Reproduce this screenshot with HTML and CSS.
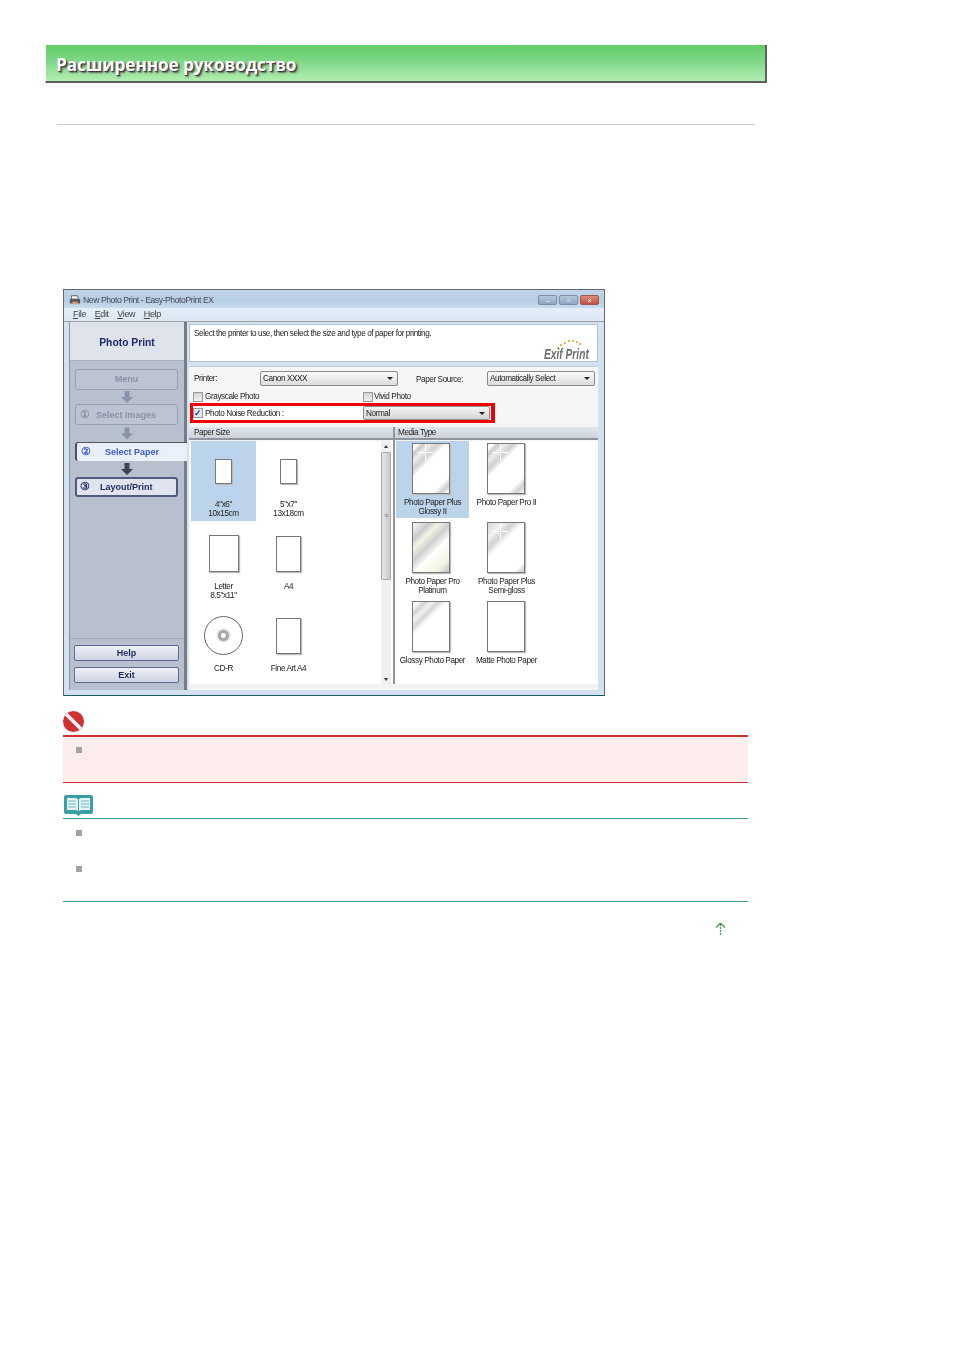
FILE: index.html
```html
<!DOCTYPE html>
<html lang="ru">
<head>
  <meta charset="UTF-8" />
  <title>Расширенное руководство</title>
  <link rel="stylesheet" href="styles.css">
</head>
<body>
  <header class="banner"><h1>Расширенное руководство</h1></header>
  <hr class="rule">

  <div class="window">
    <div class="titlebar">
      <svg class="app-icon" width="12" height="12" viewBox="0 0 14 12"><path d="M3 1h7l1 4H3z" fill="#f3f3f3" stroke="#555"/><rect x="1" y="5" width="12" height="5" fill="#555"/><rect x="4" y="8" width="6" height="3" fill="#d8a070"/></svg>
      <span class="title-text">New Photo Print - Easy-PhotoPrint EX</span>
      <span class="winbtn">–</span><span class="winbtn">▫</span><span class="winbtn close">×</span>
    </div>
    <div class="menubar">
      <span><u>F</u>ile</span><span><u>E</u>dit</span><span><u>V</u>iew</span><span><u>H</u>elp</span>
    </div>

    <div class="win-body">
      <aside class="sidebar">
        <div class="side-head">Photo Print</div>
        <div class="steps">
          <div class="step off center">Menu</div>
          <svg class="arrow a14" viewBox="0 0 14 14"><path d="M4.500 1h5v6h3.500l-6 6-6-6h3.500z" fill="#8a94a8"/></svg>
          <div class="step off"><i class="w17">①</i>Select Images</div>
          <svg class="arrow a17" viewBox="0 0 14 14"><path d="M4.500 1h5v6h3.500l-6 6-6-6h3.500z" fill="#8a94a8"/></svg>
          <div class="step now"><i class="w24">②</i>Select Paper</div>
          <svg class="arrow a16" viewBox="0 0 14 14"><path d="M4.500 1h5v6h3.500l-6 6-6-6h3.500z" fill="#3c4454"/></svg>
          <div class="step next"><i class="w20">③</i>Layout/Print</div>
        </div>
        <div class="side-foot">
          <div class="side-btn">Help</div>
          <div class="side-btn">Exit</div>
        </div>
      </aside>

      <main class="panel">
        <div class="hint">
          <span>Select the printer to use, then select the size and type of paper for printing.</span>
          <div class="exif">
            <svg class="exif-dots" width="46" height="11" viewBox="0 0 46 11">
              <g fill="#f0a030"><circle cx="14" cy="9" r="1.100"/><circle cx="17" cy="6" r="1.100"/><circle cx="21" cy="4" r="1.100"/><circle cx="25" cy="2" r="1.100"/><circle cx="29" cy="2" r="1.100"/><circle cx="33" cy="3" r="1.100"/><circle cx="36" cy="5" r="1.100"/></g>
            </svg>
            <span class="exif-text">Exif Print</span>
          </div>
        </div>

        <div class="options">
          <div class="opt-row first">
            <span class="lbl-printer">Printer:</span>
            <span class="select printer">Canon XXXX</span>
            <span class="lbl-source">Paper Source:</span>
            <span class="select source">Automatically Select</span>
          </div>
          <div class="opt-row second">
            <span class="check-wrap"><span class="check"></span>Grayscale Photo</span>
            <span class="check-wrap"><span class="check"></span>Vivid Photo</span>
          </div>
          <div class="opt-row noise">
            <span class="check-wrap"><span class="check on">✓</span>Photo Noise Reduction :</span>
            <span class="select normal">Normal</span>
          </div>
        </div>

        <div class="panes">
          <section class="pane pane-size">
            <div class="pane-head">Paper Size</div>
            <div class="pane-body">
              <div class="size-grid">
                <div class="size-cell picked"><div class="size-pic"><span class="sheet s-small"></span></div><p>4"x6"<br>10x15cm</p></div>
                <div class="size-cell"><div class="size-pic"><span class="sheet s-small"></span></div><p>5"x7"<br>13x18cm</p></div>
                <div class="size-cell"><div class="size-pic"><span class="sheet s-letter"></span></div><p>Letter<br>8.5"x11"</p></div>
                <div class="size-cell"><div class="size-pic"><span class="sheet s-a4"></span></div><p>A4</p></div>
                <div class="size-cell"><div class="size-pic"><span class="disc"></span></div><p>CD-R</p></div>
                <div class="size-cell"><div class="size-pic"><span class="sheet s-a4"></span></div><p>Fine Art A4</p></div>
              </div>
              <div class="scrollbar">
                <span class="sc-up"></span>
                <span class="sc-thumb">≡</span>
                <span class="sc-down"></span>
              </div>
            </div>
          </section>
          <section class="pane pane-media">
            <div class="pane-head">Media Type</div>
            <div class="media-grid">
              <div class="media-cell picked"><span class="paper glossy"></span><p>Photo Paper Plus<br>Glossy II</p></div>
              <div class="media-cell"><span class="paper glossy"></span><p>Photo Paper Pro II</p></div>
              <div class="media-cell"><span class="paper platinum"></span><p>Photo Paper Pro<br>Platinum</p></div>
              <div class="media-cell"><span class="paper semi"></span><p>Photo Paper Plus<br>Semi-gloss</p></div>
              <div class="media-cell"><span class="paper corner"></span><p>Glossy Photo Paper</p></div>
              <div class="media-cell"><span class="paper"></span><p>Matte Photo Paper</p></div>
            </div>
          </section>
        </div>
      </main>
    </div>
  </div>

  <div class="notice">
    <svg class="icon-stop" width="21" height="21" viewBox="0 0 21 21"><circle cx="10.500" cy="10.500" r="10.500" fill="#cf3030"/><path d="M2 4.500 4.500 2 19 16.500 16.500 19z" fill="#fff"/></svg>
    <div class="alert-box"><span class="bullet"></span></div>
  </div>

  <div class="note">
    <svg class="icon-book" width="29" height="21" viewBox="0 0 29 21">
      <path d="M2 0h25a2 2 0 0 1 2 2v15a2 2 0 0 1-2 2H17l-2.500 2L12 19H2a2 2 0 0 1-2-2V2a2 2 0 0 1 2-2z" fill="#3a9fa5"/>
      <path d="M3 3h9l2 1v12l-2-1H3zM26 3h-9l-2 1v12l2-1h9z" fill="#e6f4f4"/>
      <path d="M4 6h8M4 9h8M4 12h8M17 6h8M17 9h8M17 12h8" stroke="#6fbcc0"/>
    </svg>
    <div class="note-line"></div>
    <div class="note-item"><span class="bullet"></span></div>
    <div class="note-item"><span class="bullet"></span></div>
    <div class="note-end"></div>
  </div>

  <div class="to-top">
    <svg width="11" height="13" viewBox="0 0 11 13"><path d="M5.500 1 1 5.500M5.500 1 10 5.500" stroke="#4d9a5a" stroke-width="1.400" fill="none"/><path d="M5.500 2v11" stroke="#3f9150" stroke-width="1.200" stroke-dasharray="2 1"/></svg>
  </div>
</body>
</html>
```

FILE: styles.css
```css
* {
  margin: 0;
  padding: 0;
  box-sizing: border-box;
}
body {
  background: #fff;
  font-family: "Liberation Sans", Arial, sans-serif;
  width: 954px;
  height: 1350px;
  overflow: hidden;
}

/* green page banner */
.banner {
  width: 722px;
  height: 38px;
  margin: 45px 0 0 45px;
  padding-left: 10px;
  background: linear-gradient(to bottom, #62cb69, #7fd886 45%, #b2eeb0);
  border-right: 2px solid #5f5f5f;
  border-bottom: 2px solid #5f5f5f;
  border-left: 1px solid #fff;
}
.banner h1 {
  font-family: "Open Sans", sans-serif;
  font-size: 17.200px;
  font-weight: 700;
  line-height: 40px;
  letter-spacing: -0.1px;
  color: #fff;
  text-shadow: 1px 1px 1px #333, 2px 2px 2px #666;
}
.rule {
  width: 698px;
  height: 1px;
  margin: 41px 0 0 57px;
  border: 0;
  background: #ccc;
}

/* application window screenshot */
.window {
  width: 542px;
  height: 407px;
  margin: 164px 0 0 63px;
  background: #d3e2f0;
  border: 1px solid #5d6a70;
  border-bottom-color: #1d5a60;
  color: #222;
  font-size: 8.200px;
  letter-spacing: -0.42px;
  filter: blur(0.35px);
}
.titlebar {
  height: 18px;
  display: flex;
  align-items: center;
  gap: 2px;
  padding: 2px 5px 0;
  background: linear-gradient(to bottom, #c3d4e6, #b6cde4 60%, #c8dcee);
}
.app-icon {
  margin-right: 0;
}
.title-text {
  flex: 1;
  color: #4a4a56;
  font-size: 8.600px;
}
.winbtn {
  width: 19px;
  height: 10px;
  line-height: 9px;
  text-align: center;
  color: #fff;
  font-size: 8px;
  background: linear-gradient(#b5c8dc, #8fa8c2);
  border: 1px solid #7c8ea4;
  border-radius: 2px;
}
.winbtn.close {
  background: linear-gradient(#e08a7a, #c0503e);
  border-color: #9a5a50;
}
.menubar {
  height: 14px;
  display: flex;
  align-items: center;
  gap: 8.500px;
  padding: 0 0 2px 9px;
  background: linear-gradient(#e6eff8, #dbe7f3);
  border-bottom: 1px solid #9aa0a6;
  color: #444;
  font-size: 9px;
  letter-spacing: -0.35px;
}

.win-body {
  height: 368px;
  display: flex;
  gap: 2px;
  padding-left: 5px;
}

/* left column */
.sidebar {
  width: 118px;
  height: 100%;
  display: flex;
  flex-direction: column;
  background: #b8bfcf;
  border-right: 3px solid #777d86;
  border-left: 1px solid #8d939e;
}
.side-head {
  height: 39px;
  line-height: 42px;
  text-align: center;
  background: #dfe4ec;
  border-bottom: 1px solid #a9b0bd;
  color: #1e2a6a;
  font-size: 10.300px;
  font-weight: 700;
  letter-spacing: 0;
}
.steps {
  display: flex;
  flex-direction: column;
  padding: 8px 6px 0 5px;
}
.step {
  height: 21px;
  line-height: 19px;
  padding-left: 4px;
  font-size: 9px;
  font-weight: 700;
  letter-spacing: 0;
  border: 1px solid #98a0b4;
  border-radius: 3px;
  color: #8a92a8;
  background: #bcc3d2;
}
.step.center {
  padding-left: 0;
  text-align: center;
}
.step i {
  display: inline-block;
  font-style: normal;
  font-size: 11px;
}
.w17 { width: 16px; }
.w24 { width: 24px; }
.w20 { width: 20px; }
.step.now {
  height: 19px;
  line-height: 16px;
  margin-right: -9px;
  color: #3a5ad0;
  background: #eaf0f9;
  border: 0;
  border-left: 2px solid #4a4f5a;
  border-top: 1px solid #555;
  border-radius: 3px 0 0 3px;
  position: relative;
}
.step.next {
  height: 20px;
  padding-left: 3px;
  color: #1f2a5a;
  background: #dfe4ee;
  border: 2px solid #4f5c80;
  line-height: 15px;
}
.arrow {
  display: block;
  align-self: center;
  width: 14px;
}
.a14 { height: 14px; }
.a17 { height: 17px; }
.a16 { height: 16px; }
.side-foot {
  margin-top: auto;
  padding: 6px 5px 7px 4px;
  border-top: 1px solid #a5acbb;
  display: flex;
  flex-direction: column;
  gap: 6px;
}
.side-btn {
  height: 16px;
  line-height: 14px;
  text-align: center;
  font-size: 9px;
  font-weight: 700;
  letter-spacing: 0;
  color: #1f2a5a;
  background: linear-gradient(#eef1f7, #cdd3e2);
  border: 1px solid #5d6a90;
  border-radius: 2px;
}

/* right column */
.panel {
  width: 409px;
  display: flex;
  flex-direction: column;
}
.hint {
  height: 38px;
  margin: 2px 0 4px 0;
  padding: 4px 4px;
  position: relative;
  background: #fff;
  border: 1px solid #b8c2cc;
  line-height: 10px;
}
.exif {
  position: absolute;
  right: 7px;
  bottom: 1px;
  width: 46px;
  display: flex;
  flex-direction: column;
}
.exif-dots {
  display: block;
  margin-bottom: -3px;
}
.exif-text {
  white-space: nowrap;
  font-size: 15px;
  line-height: 13px;
  font-style: italic;
  font-weight: 700;
  letter-spacing: 0;
  color: #6f6f6f;
  transform: scaleX(0.68);
  transform-origin: left center;
}
.options {
  height: 58px;
  background: #f6f6f6;
  border-top: 1px solid #c6ced6;
  padding: 4px 0 0 1px;
}
.opt-row {
  display: flex;
  align-items: center;
}
.opt-row.first {
  height: 15px;
  padding-left: 4px;
}
.lbl-printer { width: 66px; }
.lbl-source { width: 71px; margin-left: 18px; padding-top: 2px; }
.select {
  height: 15px;
  line-height: 13px;
  padding-left: 2px;
  position: relative;
  background: linear-gradient(#fafafa, #dcdcdc);
  border: 1px solid #8a8a8a;
  border-radius: 2px;
}
.select::after {
  content: "";
  position: absolute;
  right: 4px;
  top: 5px;
  border: 3px solid transparent;
  border-top: 3px solid #222;
}
.select.printer { width: 138px; }
.select.source { width: 108px; }
.opt-row.second {
  height: 11px;
  margin-top: 5px;
  padding-left: 3px;
}
.check-wrap {
  display: flex;
  align-items: center;
  gap: 2px;
}
.opt-row.second .check-wrap:first-child { width: 170px; }
.opt-row.second .check-wrap:last-child { gap: 1px; }
.check {
  width: 10px;
  height: 10px;
  background: linear-gradient(#d2d2d2, #f2f2f2);
  border: 1px solid #9a9a9a;
}
.check.on {
  font-size: 9px;
  line-height: 8px;
  font-weight: 700;
  color: #123a90;
  background: #dfe9f5;
}
.opt-row.noise {
  width: 305px;
  height: 20px;
  margin-top: 1px;
  background: #fff;
  border: solid #f00000;
  border-width: 3px 4px 3px 3px;
}
.noise .check-wrap { width: 170px; }
.select.normal {
  width: 127px;
  height: 14px;
  background: linear-gradient(#f4f4f4, #d4d4d4);
}

.panes {
  flex: 1;
  display: flex;
  align-items: flex-start;
  padding-top: 3px;
  background: #f3f3f3;
}
.pane-head {
  height: 13px;
  line-height: 12px;
  padding-left: 5px;
  background: linear-gradient(#e2e6ec, #cdd3da);
  border-bottom: 2px solid #8f959c;
  border-radius: 2px 2px 0 0;
}
.pane-size {
  width: 206px;
  border-right: 2px solid #8f959c;
}
.pane-media {
  width: 203px;
}
.pane-media .pane-head {
  padding-left: 3px;
}
.pane-body {
  height: 243px;
  margin-top: 1px;
  display: flex;
  background: #fff;
}
.size-grid {
  width: 192px;
  padding-left: 2px;
  display: grid;
  grid-template-columns: 65px 65px;
  grid-auto-rows: 80px;
  row-gap: 2px;
  align-content: start;
}
.size-cell p,
.media-cell p {
  text-align: center;
  line-height: 9px;
}
.size-pic {
  height: 58px;
  margin-bottom: 1px;
  padding-top: 3px;
  display: flex;
  align-items: center;
  justify-content: center;
}
.picked {
  background: #bcd3ec;
}
.sheet {
  display: block;
  background: #fff;
  border: 1px solid #77777c;
  box-shadow: 1px 1px 1px #bbb;
}
.s-small { width: 17px; height: 25px; }
.s-letter { width: 30px; height: 37px; }
.s-a4 { width: 25px; height: 36px; }
.disc {
  width: 39px;
  height: 39px;
  border-radius: 50%;
  border: 1px solid #666;
  background: radial-gradient(circle, #fff 0 2px, #a8a8a8 3px 5px, #e4e4e4 6px, #fff 8px);
}
.scrollbar {
  width: 10px;
  display: flex;
  flex-direction: column;
  align-items: stretch;
  background: #f0f0f0;
}
.sc-up,
.sc-down {
  height: 11px;
  position: relative;
}
.sc-up::after,
.sc-down::after {
  content: "";
  position: absolute;
  left: 3px;
  border: 2px solid transparent;
}
.sc-up::after { top: 2px; border-bottom: 3px solid #333; }
.sc-down::after { bottom: 1px; border-top: 3px solid #333; }
.sc-thumb {
  height: 128px;
  line-height: 126px;
  text-align: center;
  font-size: 7px;
  color: #777;
  background: linear-gradient(to right, #e6e6e6, #c8c8c8);
  border: 1px solid #a8a8a8;
  border-radius: 2px;
}
.sc-down {
  margin-top: auto;
}
.media-grid {
  height: 243px;
  margin-top: 1px;
  padding-left: 1px;
  background: #fff;
  display: grid;
  grid-template-columns: 73px 75px;
  grid-auto-rows: 77px;
  row-gap: 2px;
  align-content: start;
}
.media-cell {
  padding-top: 2px;
}
.paper {
  display: block;
  width: 38px;
  height: 51px;
  margin: 0 0 4px 16px;
  background: #fff;
  border: 1px solid #77777c;
  box-shadow: 1px 1px 1px #bbb;
}
.media-cell:nth-child(even) .paper {
  margin-left: 18px;
}
.paper.glossy {
  background:
    linear-gradient(#fff, #fff) 12px 0 / 1px 16px no-repeat,
    linear-gradient(#fff, #fff) 4px 8px / 16px 1px no-repeat,
    linear-gradient(135deg, #fff 6%, #c9c9c9 12%, #eee 20%, #cfcfcf 30%, #fff 40%, #fff 80%, #d0d0d0 90%, #fff 100%);
}
.paper.platinum {
  background: linear-gradient(135deg, #eee 6%, #c9c9c9 20%, #f4f4e4 30%, #cfcfcf 45%, #fff 60%, #f2f2e2 85%, #ccc 95%);
}
.paper.semi {
  background:
    linear-gradient(#fff, #fff) 12px 0 / 1px 16px no-repeat,
    linear-gradient(#fff, #fff) 4px 8px / 16px 1px no-repeat,
    linear-gradient(135deg, #ddd 6%, #f2f2f2 18%, #d2d2d2 30%, #fff 42%, #fff 88%, #d8d8d8 95%);
}
.paper.corner {
  background: linear-gradient(135deg, #fff 6%, #d2d2d2 14%, #f2f2f2 22%, #d6d6d6 30%, #fff 40%);
}

/* caution and note blocks */
.notice {
  margin: 15px 0 0 63px;
  width: 685px;
}
.icon-stop {
  display: block;
  margin-bottom: 3px;
}
.alert-box {
  height: 48px;
  padding: 10px 0 0 13px;
  background: #feeded;
  border-top: 2px solid #cf3030;
  border-bottom: 1px solid #cf3030;
}
.bullet {
  display: block;
  width: 6px;
  height: 6px;
  background: #a3a3a3;
}
.note {
  margin: 12px 0 0 63px;
  width: 685px;
}
.icon-book {
  display: block;
  margin-left: 1px;
}
.note-line {
  height: 1px;
  margin-top: 2px;
  background: #3a9a90;
}
.note-item {
  height: 36px;
  padding: 11px 0 0 13px;
}
.note-end {
  height: 1px;
  margin-top: 10px;
  background: #3a9a90;
}
.to-top {
  margin: 20px 0 0 715px;
  line-height: 0;
}
```
